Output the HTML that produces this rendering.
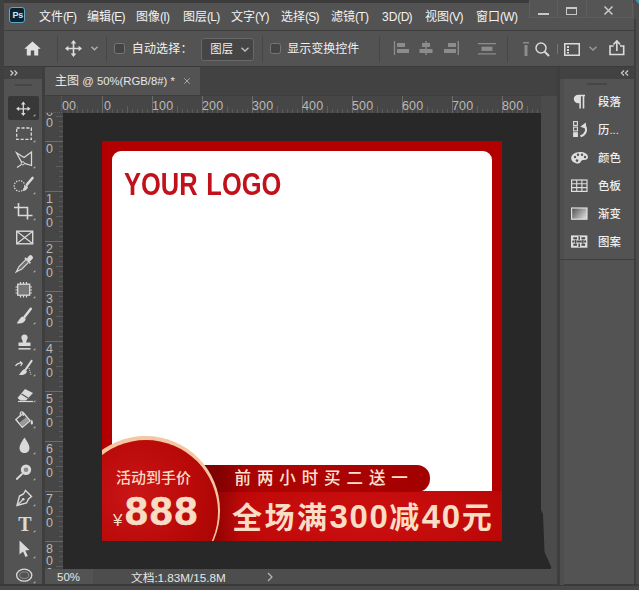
<!DOCTYPE html>
<html><head><meta charset="utf-8">
<style>
*{margin:0;padding:0;box-sizing:border-box}
html,body{width:639px;height:590px;overflow:hidden;background:#535353}
body{position:relative;font-family:"Liberation Sans","Noto Sans CJK SC",sans-serif;font-size:12px;color:#e6e6e6}
.a{position:absolute}
.t{position:absolute;white-space:nowrap;line-height:1}
svg{position:absolute;overflow:visible}
.m{color:#f2f2f2}
.l{font-size:12px;letter-spacing:-0.7px}
.p{font-size:11.400px;color:#f0f0f0;font-weight:500}
</style></head><body>
<!-- frame -->
<div class="a" style="left:0;top:0;width:639px;height:590px;background:#535353"></div>
<div class="a" style="left:0;top:0;width:639px;height:3px;background:#3c3c3c"></div>
<div class="a" style="left:0;top:0;width:4px;height:590px;background:#404040"></div>
<div class="a" style="left:634px;top:0;width:5px;height:590px;background:#4c4c4c"></div><div class="a" style="left:634px;top:19px;width:1.500px;height:571px;background:#3e3e3e"></div>
<svg style="left:635px;top:0" width="4" height="5"><path d="M0.500 0H4V4.500Z" fill="#3f8fa8"/></svg>
<!-- menubar -->
<div class="a" id="menubar" style="left:4px;top:3px;width:630px;height:27px;background:#535353"></div>
<div class="a" style="left:9.300px;top:7.300px;width:16.200px;height:15.400px;background:#0a2233;border:1.300px solid #5fa8c4;border-radius:3px"></div>
<div class="t" style="left:12.500px;top:10.500px;font-size:9px;font-weight:bold;color:#c8e6f8;letter-spacing:-0.200px">Ps</div>
<div class="t m" style="left:39px;top:10.500px">文件<span class="l">(F)</span></div>
<div class="t m" style="left:87px;top:10.500px">编辑<span class="l">(E)</span></div>
<div class="t m" style="left:136px;top:10.500px">图像<span class="l">(I)</span></div>
<div class="t m" style="left:183px;top:10.500px">图层<span class="l">(L)</span></div>
<div class="t m" style="left:231px;top:10.500px">文字<span class="l">(Y)</span></div>
<div class="t m" style="left:281px;top:10.500px">选择<span class="l">(S)</span></div>
<div class="t m" style="left:331px;top:10.500px">滤镜<span class="l">(T)</span></div>
<div class="t m" style="left:382px;top:10.500px">3D<span class="l">(D)</span></div>
<div class="t m" style="left:425px;top:10.500px">视图<span class="l">(V)</span></div>
<div class="t m" style="left:476px;top:10.500px">窗口<span class="l">(W)</span></div>
<!-- window controls -->
<div class="a" style="left:529px;top:0;width:104px;height:18px;border:1px solid #5e5e5e;border-top:none;background:#555"></div>
<div class="a" style="left:557px;top:0;width:1px;height:18px;background:#5e5e5e"></div>
<div class="a" style="left:586px;top:0;width:1px;height:18px;background:#5e5e5e"></div>
<div class="a" style="left:538px;top:12.500px;width:11px;height:2px;background:#c8c8c8"></div>
<div class="a" style="left:566px;top:7px;width:11px;height:8px;border:1.5px solid #c8c8c8;border-top-width:2px"></div>
<svg style="left:604px;top:6px" width="9" height="9"><path d="M0.5 0.5L8.5 8.5M8.5 0.5L0.5 8.5" stroke="#c8c8c8" stroke-width="1.6" fill="none"/></svg>
<!-- options bar -->
<div class="a" style="left:4px;top:30px;width:630px;height:1px;background:#3e3e3e"></div>
<div class="a" style="left:4px;top:31px;width:630px;height:35px;background:#535353"></div>
<div class="a" style="left:4px;top:66px;width:630px;height:1px;background:#3a3a3a"></div>
<!-- home -->
<svg style="left:24px;top:41px" width="17" height="15" viewBox="0 0 17 15"><path d="M8.5 0.5L0.3 7.7H2.8V14.5H6.8V9.5H10.2V14.5H14.2V7.7H16.7Z" fill="#e0e0e0"/></svg>
<div class="a" style="left:57px;top:36px;width:1px;height:26px;background:#474747"></div>
<!-- move icon opts -->
<svg style="left:65px;top:40px" width="17" height="17" viewBox="0 0 17 17"><path d="M8.5 0L5.7 3.4H7.7V7.7H3.4V5.7L0 8.5L3.4 11.3V9.3H7.7V13.6H5.7L8.5 17L11.3 13.6H9.3V9.3H13.6V11.3L17 8.5L13.6 5.7V7.7H9.3V3.4H11.3Z" fill="#dcdcdc"/></svg>
<svg style="left:91px;top:46px" width="7" height="5"><path d="M0.5 0.7L3.5 3.8L6.5 0.7" stroke="#b0b0b0" stroke-width="1.3" fill="none"/></svg>
<div class="a" style="left:106px;top:36px;width:1px;height:26px;background:#474747"></div>
<div class="a" style="left:114px;top:43px;width:11px;height:11px;border:1px solid #767676;border-radius:2.500px;background:#444"></div>
<div class="t" style="left:131.700px;top:43px;font-size:12px;letter-spacing:0.200px;color:#f0f0f0">自动选择：</div>
<div class="a" style="left:200.500px;top:38px;width:53px;height:22.500px;border:1px solid #686868;border-radius:3px;background:#454545"></div>
<div class="t" style="left:210.300px;top:43.700px;font-size:11.400px;color:#f0f0f0">图层</div>
<svg style="left:241px;top:47px" width="8" height="5"><path d="M0.5 0.7L4 4L7.5 0.7" stroke="#c0c0c0" stroke-width="1.3" fill="none"/></svg>
<div class="a" style="left:261.500px;top:36px;width:1px;height:26px;background:#474747"></div>
<div class="a" style="left:270px;top:43px;width:11px;height:11px;border:1px solid #767676;border-radius:2.500px;background:#444"></div>
<div class="t" style="left:287.300px;top:43px;font-size:12px;color:#f0f0f0">显示变换控件</div>
<div class="a" style="left:379px;top:36px;width:1px;height:26px;background:#474747"></div>
<!-- align icons -->
<svg style="left:394px;top:41px" width="15" height="14"><path d="M0.5 0V14" stroke="#8c8c8c" stroke-width="1.4"/><rect x="3" y="2" width="8" height="4" fill="#8c8c8c"/><rect x="3" y="8" width="12" height="4" fill="#8c8c8c"/></svg>
<svg style="left:419px;top:41px" width="14" height="14"><path d="M7 0V14" stroke="#8c8c8c" stroke-width="1.4"/><rect x="3" y="2" width="8" height="4" fill="#8c8c8c"/><rect x="0.5" y="8" width="13" height="4" fill="#8c8c8c"/></svg>
<svg style="left:443.500px;top:41px" width="15" height="14"><path d="M14.3 0V14" stroke="#8c8c8c" stroke-width="1.4"/><rect x="4" y="2" width="8" height="4" fill="#8c8c8c"/><rect x="0" y="8" width="12" height="4" fill="#8c8c8c"/></svg>
<svg style="left:477.500px;top:43px" width="18" height="12"><path d="M0 0.700H18M0 10.800H18" stroke="#8c8c8c" stroke-width="1.300"/><rect x="3.500" y="3.700" width="11" height="4.200" fill="#8c8c8c"/></svg>
<div class="a" style="left:507px;top:36px;width:1px;height:26px;background:#474747"></div>
<svg style="left:523px;top:42px" width="6" height="14"><rect x="0" y="0" width="6" height="1.5" fill="#8c8c8c"/><rect x="1.5" y="3" width="3" height="11" fill="#8c8c8c"/></svg>
<svg style="left:535px;top:42px" width="15" height="15"><circle cx="6" cy="6" r="5" stroke="#d8d8d8" stroke-width="1.5" fill="none"/><path d="M9.7 9.7L14 14" stroke="#d8d8d8" stroke-width="2"/></svg>
<div class="a" style="left:557px;top:44px;width:1px;height:10px;background:#777"></div>
<svg style="left:564px;top:43px" width="16" height="13"><rect x="0.75" y="0.75" width="14.500" height="11.500" stroke="#dcdcdc" stroke-width="1.5" fill="none"/><rect x="3" y="3" width="2" height="2" fill="#dcdcdc"/><rect x="3" y="6" width="2" height="2" fill="#dcdcdc"/><rect x="3" y="9" width="2" height="1.5" fill="#dcdcdc"/></svg>
<svg style="left:589px;top:46px" width="8" height="5"><path d="M0.5 0.7L4 4L7.5 0.7" stroke="#9a9a9a" stroke-width="1.3" fill="none"/></svg>
<svg style="left:609px;top:40px" width="16" height="16"><path d="M4.700 6H1V14.500H14.700V6H11" stroke="#dcdcdc" stroke-width="1.600" fill="none"/><path d="M7.850 11V2" stroke="#dcdcdc" stroke-width="1.600"/><path d="M4.500 4.500L7.850 1L11.200 4.500" stroke="#dcdcdc" stroke-width="1.600" fill="none"/></svg>

<!-- left toolbar -->
<div class="a" style="left:4px;top:67px;width:38px;height:12px;background:#424242"></div>
<svg style="left:10px;top:70px" width="8" height="6"><path d="M0.5 0.5L3 3L0.5 5.5M4.5 0.5L7 3L4.5 5.5" stroke="#d0d0d0" stroke-width="1.2" fill="none"/></svg>
<div class="a" style="left:4px;top:79px;width:38px;height:506px;background:#535353"></div>
<div class="a" style="left:15px;top:84px;width:17px;height:2px;background:#464646"></div>
<div class="a" style="left:42px;top:67px;width:3px;height:518px;background:#3e3e3e"></div>
<div class="a" style="left:8px;top:96px;width:31px;height:24px;background:#383838;border-radius:2px"></div>
<svg id="tools" style="left:0;top:0" width="46" height="590" viewBox="0 0 46 590" fill="none" stroke="#dadada" stroke-width="1.4">
<!-- move -->
<path d="M23.3 101.6L21.0 104.6H22.650000000000002V108.14999999999999H19.1V106.5L16.1 108.8L19.1 111.1V109.45H22.650000000000002V113.0H21.0L23.3 116.0L25.6 113.0H23.95V109.45H27.5V111.1L30.5 108.8L27.5 106.5V108.14999999999999H23.95V104.6H25.6Z" fill="#dadada" stroke="none"/>
<path d="M35.300 116.2v-2.200l-2.200 2.200Z" fill="#b4b4b4" stroke="none"/>
<!-- marquee -->
<rect x="16.700" y="128" width="14.600" height="11.400" stroke-dasharray="3.100 1.700" stroke-width="1.300"/>
<path d="M35.300 142.2v-2.200l-2.200 2.200Z" fill="#b4b4b4" stroke="none"/>
<!-- poly lasso -->
<path d="M22 163L16.500 152.800L24 157.500L31.500 152V165.500L24.500 163.300" stroke-width="1.250"/><circle cx="22.800" cy="163.300" r="1.600" stroke-width="1"/><path d="M21.500 164.500L17 167.500" stroke-width="1.100"/>
<path d="M35.300 168.2v-2.200l-2.200 2.200Z" fill="#b4b4b4" stroke="none"/>
<!-- quick select -->
<circle cx="19.5" cy="186" r="5.3" stroke-dasharray="1.3 1.3" stroke-width="1.3"/>
<path d="M32.5 178L27 184.5" stroke-width="2.6" stroke-linecap="round"/><path d="M26.5 185.5C25 186 23.500 188 22.500 191C25.500 191 27.500 189 28 187Z" fill="#dadada" stroke="none"/>
<path d="M35.300 194.2v-2.200l-2.200 2.200Z" fill="#b4b4b4" stroke="none"/>
<!-- crop -->
<path d="M18.5 203V215.500H32.500M14 207.500H27.500V219.500" stroke-width="1.6"/>
<path d="M35.300 220.2v-2.200l-2.200 2.200Z" fill="#b4b4b4" stroke="none"/>
<!-- frame -->
<rect x="16.700" y="231.200" width="16" height="12.600" stroke-width="1.400"/><path d="M16.700 231.200L32.700 243.800M32.700 231.200L16.700 243.800" stroke-width="1.200"/>
<!-- eyedropper -->
<g transform="translate(24.2 264) rotate(45)"><rect x="-2.300" y="-11.300" width="4.600" height="6" rx="2" fill="#dadada" stroke="none"/><rect x="-3.800" y="-5.800" width="7.600" height="1.900" rx="0.500" fill="#dadada" stroke="none"/><path d="M-1.900 -3.900V5.500L-0.500 9.500L0 11.300L0.500 9.500L1.900 5.500V-3.900" stroke-width="1.150" fill="#707070"/></g>
<path d="M35.300 272.2v-2.200l-2.200 2.200Z" fill="#b4b4b4" stroke="none"/>
<!-- patch -->
<rect x="17.700" y="284.200" width="12" height="11" fill="#777" stroke-width="1.300"/><path d="M20.500 282V284M23.500 282V284M26.500 282V284M20.500 295.500V297.500M23.500 295.500V297.500M26.500 295.500V297.500M15.500 287H17.500M15.500 290H17.500M15.500 293H17.500M30 287H32M30 290H32M30 293H32" stroke-width="1.200"/>
<path d="M35.300 298.2v-2.200l-2.200 2.200Z" fill="#b4b4b4" stroke="none"/>
<!-- brush -->
<path d="M30.800 308.800L24.500 317" stroke-width="2.500" stroke-linecap="round"/><path d="M22.800 316.500C20.300 317 19.500 320 16.700 323.200C20.500 324 24.800 323 25.800 319Z" fill="#dadada" stroke="none"/>
<path d="M35.300 324.2v-2.200l-2.200 2.200Z" fill="#b4b4b4" stroke="none"/>
<!-- stamp -->
<path d="M24.500 334.500C22.300 334.500 21.300 336 21.300 337.500C21.300 339 22.800 340 22.800 342.500H18.500V346H30.500V342.500H26.200C26.200 340 27.700 339 27.700 337.500C27.700 336 26.700 334.500 24.500 334.500Z" fill="#dadada" stroke="none"/><path d="M18.500 348.800H30.500" stroke-width="1.500"/>
<path d="M35.300 350.2v-2.200l-2.200 2.200Z" fill="#b4b4b4" stroke="none"/>
<!-- history brush -->
<path d="M31.500 361L26 369" stroke-width="2.200" stroke-linecap="round"/><path d="M25 369C23 369.500 21.500 371 19 375C22.500 375.500 26 374.500 27 371.500Z" fill="#dadada" stroke="none"/><path d="M15.500 366C17 363.500 19.500 362.500 22.500 363.500M22.500 363.500L20 361.500M22.500 363.500L20.500 366" stroke-width="1.200"/><path d="M29 368L31 375" stroke-width="1" stroke-dasharray="1 1"/>
<path d="M35.300 376.2v-2.200l-2.200 2.200Z" fill="#b4b4b4" stroke="none"/>
<!-- eraser -->
<path d="M25 389L33 393L26 400.500H20.500L17.500 398Z" fill="#dadada" stroke="none"/><path d="M21.500 394L28 398" stroke="#535353" stroke-width="1.200"/><path d="M18 401.500H33" stroke-width="1.200"/>
<path d="M35.300 402.2v-2.200l-2.200 2.200Z" fill="#b4b4b4" stroke="none"/>
<!-- bucket -->
<g transform="translate(22.8 420) rotate(-40)"><rect x="-5" y="-4.800" width="10" height="10" stroke-width="1.400"/><rect x="-4.300" y="0" width="8.600" height="4.500" fill="#9a9a9a" stroke="none"/></g><path d="M20.300 416.500V413.300C20.300 411.300 23.300 411.300 23.300 413.300V416" stroke-width="1.200"/><path d="M31.800 419.500C30.200 422 30.200 424.300 31.800 424.800C33.400 424.300 33.400 422 31.800 419.500Z" fill="#dadada" stroke="none"/>
<path d="M35.300 428.2v-2.200l-2.200 2.200Z" fill="#b4b4b4" stroke="none"/>
<!-- blur drop -->
<path d="M24.500 437.500C22 441.500 19.500 444.500 19.500 448C19.500 451 21.700 453 24.500 453C27.300 453 29.500 451 29.500 448C29.500 444.500 27 441.500 24.500 437.500Z" fill="#dadada" stroke="none"/>
<path d="M35.300 454.2v-2.200l-2.200 2.200Z" fill="#b4b4b4" stroke="none"/>
<!-- dodge -->
<circle cx="26" cy="469.700" r="5.200" fill="#dadada" stroke="none"/><circle cx="26" cy="469.700" r="2.300" fill="#8a8a8a" stroke="none"/><path d="M22 474L16.800 479" stroke-width="1.800" stroke-linecap="round"/>
<path d="M35.300 480.2v-2.200l-2.200 2.200Z" fill="#b4b4b4" stroke="none"/>
<!-- pen -->
<path d="M25.500 490.500L31.500 496.500L28.500 499L26.500 503L17 505.500L19.500 496L23.500 494Z" stroke-width="1.400"/><path d="M17.500 505L22.500 500" stroke-width="1.100"/><circle cx="23.200" cy="499.300" r="1.300" fill="#dadada" stroke="none"/>
<path d="M35.300 506.2v-2.200l-2.200 2.200Z" fill="#b4b4b4" stroke="none"/>
</svg>
<div class="t" style="left:18.300px;top:514px;font-family:'Liberation Serif',serif;font-size:20px;color:#dadada;font-weight:bold">T</div>
<svg style="left:0;top:0" width="46" height="590" viewBox="0 0 46 590" fill="none" stroke="#dadada" stroke-width="1.400">
<path d="M35.300 532.2v-2.200l-2.200 2.200Z" fill="#b4b4b4" stroke="none"/>
<path d="M19.500 540.500V554.500L23 551.500L25.500 557L27.800 556L25.300 550.500L29.500 550Z" fill="#dadada" stroke="none"/>
<path d="M35.300 558.2v-2.200l-2.200 2.200Z" fill="#b4b4b4" stroke="none"/>
<ellipse cx="24.200" cy="575.200" rx="7.600" ry="6" stroke-width="1.300"/><ellipse cx="24.200" cy="575.200" rx="4.500" ry="3.300" stroke-width="0.800" stroke="#9a9a9a"/>
<path d="M35.300 583.2v-2.200l-2.200 2.200Z" fill="#b4b4b4" stroke="none"/>
</svg>


<!-- tab bar -->
<div class="a" style="left:45px;top:67px;width:512px;height:29px;background:#424242"></div>
<div class="a" style="left:45px;top:67px;width:155px;height:29px;background:#535353"></div>
<div class="t" style="left:55px;top:75px;font-size:12px">主图 <span style="font-size:11.300px">@ 50%(RGB/8#) *</span></div>
<svg style="left:184px;top:78px" width="6" height="6"><path d="M0.3 0.3L5.700 5.700M5.700 0.300L0.300 5.700" stroke="#a8a8a8" stroke-width="1" fill="none"/></svg>

<!-- rulers -->
<div class="a" style="left:45px;top:95px;width:496px;height:18px;background:#464646;border-top:1px solid #3e3e3e"></div>
<div class="a" style="left:45px;top:113px;width:18px;height:456px;background:#464646"></div>
<!-- canvas -->
<div class="a" style="left:63px;top:113px;width:478px;height:456px;background:#282828"></div>
<svg style="left:0;top:0" width="639" height="590" viewBox="0 0 639 590">
<path d="M102.5 96V113M152.5 96V113M202.5 96V113M252.5 96V113M302.5 96V113M352.5 96V113M402.5 96V113M452.5 96V113M502.5 96V113M45 141.5H63M45 191.5H63M45 241.5H63M45 291.5H63M45 341.5H63M45 391.5H63M45 441.5H63M45 491.5H63M45 541.5H63" stroke="#6c6c6c" stroke-width="1" fill="none"/>
<path d="M77.5 106V113M127.5 106V113M177.5 106V113M227.5 106V113M277.5 106V113M327.5 106V113M377.5 106V113M427.5 106V113M477.5 106V113M527.5 106V113M56 116.5H63M56 166.5H63M56 216.5H63M56 266.5H63M56 316.5H63M56 366.5H63M56 416.5H63M56 466.5H63M56 516.5H63M56 566.5H63" stroke="#5e5e5e" stroke-width="1" fill="none"/>
<path d="M67.5 109V113M72.5 109V113M82.5 109V113M87.5 109V113M92.5 109V113M97.5 109V113M107.5 109V113M112.5 109V113M117.5 109V113M122.5 109V113M132.5 109V113M137.5 109V113M142.5 109V113M147.5 109V113M157.5 109V113M162.5 109V113M167.5 109V113M172.5 109V113M182.5 109V113M187.5 109V113M192.5 109V113M197.5 109V113M207.5 109V113M212.5 109V113M217.5 109V113M222.5 109V113M232.5 109V113M237.5 109V113M242.5 109V113M247.5 109V113M257.5 109V113M262.5 109V113M267.5 109V113M272.5 109V113M282.5 109V113M287.5 109V113M292.5 109V113M297.5 109V113M307.5 109V113M312.5 109V113M317.5 109V113M322.5 109V113M332.5 109V113M337.5 109V113M342.5 109V113M347.5 109V113M357.5 109V113M362.5 109V113M367.5 109V113M372.5 109V113M382.5 109V113M387.5 109V113M392.5 109V113M397.5 109V113M407.5 109V113M412.5 109V113M417.5 109V113M422.5 109V113M432.5 109V113M437.5 109V113M442.5 109V113M447.5 109V113M457.5 109V113M462.5 109V113M467.5 109V113M472.5 109V113M482.5 109V113M487.5 109V113M492.5 109V113M497.5 109V113M507.5 109V113M512.5 109V113M517.5 109V113M522.5 109V113M532.5 109V113M537.5 109V113M59 121.5H63M59 126.5H63M59 131.5H63M59 136.5H63M59 146.5H63M59 151.5H63M59 156.5H63M59 161.5H63M59 171.5H63M59 176.5H63M59 181.5H63M59 186.5H63M59 196.5H63M59 201.5H63M59 206.5H63M59 211.5H63M59 221.5H63M59 226.5H63M59 231.5H63M59 236.5H63M59 246.5H63M59 251.5H63M59 256.5H63M59 261.5H63M59 271.5H63M59 276.5H63M59 281.5H63M59 286.5H63M59 296.5H63M59 301.5H63M59 306.5H63M59 311.5H63M59 321.5H63M59 326.5H63M59 331.5H63M59 336.5H63M59 346.5H63M59 351.5H63M59 356.5H63M59 361.5H63M59 371.5H63M59 376.5H63M59 381.5H63M59 386.5H63M59 396.5H63M59 401.5H63M59 406.5H63M59 411.5H63M59 421.5H63M59 426.5H63M59 431.5H63M59 436.5H63M59 446.5H63M59 451.5H63M59 456.5H63M59 461.5H63M59 471.5H63M59 476.5H63M59 481.5H63M59 486.5H63M59 496.5H63M59 501.5H63M59 506.5H63M59 511.5H63M59 521.5H63M59 526.5H63M59 531.5H63M59 536.5H63M59 546.5H63M59 551.5H63M59 556.5H63M59 561.5H63" stroke="#5a5a5a" stroke-width="1" fill="none"/>
</svg>
<div class="t" style="left:62px;top:100px;font-size:12.500px;color:#b9b9b9;letter-spacing:0.150px">00</div>
<div class="t" style="left:104px;top:100px;font-size:12.500px;color:#b9b9b9;letter-spacing:0.150px">0</div>
<div class="t" style="left:152.0px;top:100px;font-size:12.500px;color:#b9b9b9;letter-spacing:0.150px">100</div>
<div class="t" style="left:202.0px;top:100px;font-size:12.500px;color:#b9b9b9;letter-spacing:0.150px">200</div>
<div class="t" style="left:252.0px;top:100px;font-size:12.500px;color:#b9b9b9;letter-spacing:0.150px">300</div>
<div class="t" style="left:302.0px;top:100px;font-size:12.500px;color:#b9b9b9;letter-spacing:0.150px">400</div>
<div class="t" style="left:352.0px;top:100px;font-size:12.500px;color:#b9b9b9;letter-spacing:0.150px">500</div>
<div class="t" style="left:402.0px;top:100px;font-size:12.500px;color:#b9b9b9;letter-spacing:0.150px">600</div>
<div class="t" style="left:452.0px;top:100px;font-size:12.500px;color:#b9b9b9;letter-spacing:0.150px">700</div>
<div class="t" style="left:502.0px;top:100px;font-size:12.500px;color:#b9b9b9;letter-spacing:0.150px">800</div>
<div class="a" style="left:45px;top:113px;width:18px;height:20px;overflow:hidden"><div class="t" style="left:1px;top:-7px;font-size:12.500px;color:#b9b9b9;letter-spacing:0.150px">0</div><div class="t" style="left:1px;top:4px;font-size:12.500px;color:#b9b9b9;letter-spacing:0.150px">0</div></div>
<div class="t" style="left:46px;top:143.0px;font-size:12.500px;color:#b9b9b9;letter-spacing:0.150px">0</div>
<div class="t" style="left:46px;top:193.0px;font-size:12.500px;color:#b9b9b9;letter-spacing:0.150px">1</div>
<div class="t" style="left:46px;top:204.8px;font-size:12.500px;color:#b9b9b9;letter-spacing:0.150px">0</div>
<div class="t" style="left:46px;top:216.6px;font-size:12.500px;color:#b9b9b9;letter-spacing:0.150px">0</div>
<div class="t" style="left:46px;top:243.0px;font-size:12.500px;color:#b9b9b9;letter-spacing:0.150px">2</div>
<div class="t" style="left:46px;top:254.8px;font-size:12.500px;color:#b9b9b9;letter-spacing:0.150px">0</div>
<div class="t" style="left:46px;top:266.6px;font-size:12.500px;color:#b9b9b9;letter-spacing:0.150px">0</div>
<div class="t" style="left:46px;top:293.0px;font-size:12.500px;color:#b9b9b9;letter-spacing:0.150px">3</div>
<div class="t" style="left:46px;top:304.8px;font-size:12.500px;color:#b9b9b9;letter-spacing:0.150px">0</div>
<div class="t" style="left:46px;top:316.6px;font-size:12.500px;color:#b9b9b9;letter-spacing:0.150px">0</div>
<div class="t" style="left:46px;top:343.0px;font-size:12.500px;color:#b9b9b9;letter-spacing:0.150px">4</div>
<div class="t" style="left:46px;top:354.8px;font-size:12.500px;color:#b9b9b9;letter-spacing:0.150px">0</div>
<div class="t" style="left:46px;top:366.6px;font-size:12.500px;color:#b9b9b9;letter-spacing:0.150px">0</div>
<div class="t" style="left:46px;top:393.0px;font-size:12.500px;color:#b9b9b9;letter-spacing:0.150px">5</div>
<div class="t" style="left:46px;top:404.8px;font-size:12.500px;color:#b9b9b9;letter-spacing:0.150px">0</div>
<div class="t" style="left:46px;top:416.6px;font-size:12.500px;color:#b9b9b9;letter-spacing:0.150px">0</div>
<div class="t" style="left:46px;top:443.0px;font-size:12.500px;color:#b9b9b9;letter-spacing:0.150px">6</div>
<div class="t" style="left:46px;top:454.8px;font-size:12.500px;color:#b9b9b9;letter-spacing:0.150px">0</div>
<div class="t" style="left:46px;top:466.6px;font-size:12.500px;color:#b9b9b9;letter-spacing:0.150px">0</div>
<div class="t" style="left:46px;top:493.0px;font-size:12.500px;color:#b9b9b9;letter-spacing:0.150px">7</div>
<div class="t" style="left:46px;top:504.8px;font-size:12.500px;color:#b9b9b9;letter-spacing:0.150px">0</div>
<div class="t" style="left:46px;top:516.6px;font-size:12.500px;color:#b9b9b9;letter-spacing:0.150px">0</div>
<div class="a" style="left:45px;top:541px;width:18px;height:28px;overflow:hidden"><div class="t" style="left:1px;top:2.0px;font-size:12.500px;color:#b9b9b9;letter-spacing:0.150px">8</div><div class="t" style="left:1px;top:13.8px;font-size:12.500px;color:#b9b9b9;letter-spacing:0.150px">0</div><div class="t" style="left:1px;top:25.6px;font-size:12.500px;color:#b9b9b9;letter-spacing:0.150px">0</div></div>
<div class="a" style="left:45px;top:96px;width:17px;height:17px;background:#464646;border-right:1px dotted #606060;border-bottom:1px dotted #606060"></div>
<!-- scrollbar right -->
<div class="a" style="left:541px;top:96px;width:16px;height:489px;background:#4b4b4b"></div>
<svg style="left:0;top:0;filter:blur(0.6px)" width="639" height="590"><path d="M540 508L543 514L544.500 552L551 566.500V569.500H540Z" fill="#282828"/></svg>
<!-- status bar -->
<div class="a" style="left:45px;top:569px;width:512px;height:15px;background:#4d4d4d"></div>
<div class="a" style="left:45px;top:569px;width:48px;height:15px;background:#535353"></div>
<div class="t" style="left:57px;top:572px;font-size:11.500px">50%</div>
<div class="t" style="left:131px;top:571.500px;font-size:11.700px">文档:1.83M/15.8M</div>
<svg style="left:266.500px;top:572px" width="6" height="10"><path d="M1 1L5 5L1 9" stroke="#b8b8b8" stroke-width="1.2" fill="none"/></svg>
<div class="a" style="left:0;top:583.500px;width:639px;height:2px;background:#3a3a3a"></div>
<div class="a" style="left:0;top:585.500px;width:639px;height:4.500px;background:#494949"></div>

<!-- artboard -->
<div class="a" id="art" style="left:102px;top:141px;width:400px;height:400px;background:#b20000;overflow:hidden">
  <div class="a" style="left:10px;top:10px;width:380px;height:340px;background:#fff;border-radius:9px 9px 0 0"></div>
  <div class="t" style="left:22px;top:28px;font-size:30.500px;font-weight:bold;color:#c1121c;transform-origin:0 0;transform:scaleX(0.835);word-spacing:2px">YOUR LOGO</div>
  <!-- bottom band -->
  <div class="a" style="left:0;top:350px;width:400px;height:50px;background:linear-gradient(90deg,rgba(110,0,0,.55) 112px,rgba(110,0,0,0) 140px),radial-gradient(ellipse 230px 70px at 260px 25px,#cd1010 0%,#c20a0a 50%,#a90000 100%)"></div>
  <!-- ribbon -->
  <div class="a" style="left:60px;top:324px;width:268px;height:26.500px;border-radius:0 13px 13px 0;background:linear-gradient(90deg,rgba(90,0,0,.5) 55px,rgba(90,0,0,0) 85px),linear-gradient(90deg,#a00000,#ae0404 55%,#a20000)"></div>
  <!-- circle -->
  <div class="a" style="left:-31px;top:295px;width:149px;height:149px;border-radius:50%;background:#f5c6a2"></div>
  <div class="a" style="left:-28.300px;top:299px;width:144px;height:144px;border-radius:50%;background:radial-gradient(circle at 62px 55px,#c91616 0%,#bb0a0a 45%,#9e0000 100%)"></div>
  <div class="t" style="left:14px;top:329px;font-size:15px;color:#f8dcc6;font-weight:500">活动到手价</div>
  <div class="t" style="left:11px;top:371px;font-size:17px;color:#f8dcc6;font-weight:300">¥</div>
  <div class="t" style="left:23px;top:350px;font-size:41px;font-weight:bold;color:#f9dcc4;letter-spacing:2px;-webkit-text-stroke:0.7px #f9dcc4">888</div>
  <div class="t" style="left:132.500px;top:329px;font-size:16.500px;letter-spacing:5.900px;color:#fbe2d0;font-weight:500">前两小时买二送一</div>
  <div class="t" style="left:130px;top:359px;font-size:30px;font-weight:bold;letter-spacing:2.5px;color:#fbdcc4">全场满<span style="font-size:33px;letter-spacing:1.6px">300</span>减<span style="font-size:33px;letter-spacing:1.6px">40</span>元</div>
</div>

<!-- right panel -->
<div class="a" style="left:557px;top:67px;width:3px;height:518px;background:#3e3e3e"></div>
<div class="a" style="left:560px;top:67px;width:74px;height:12px;background:#424242"></div>
<svg style="left:621px;top:70px" width="8" height="6"><path d="M3 0.5L0.5 3L3 5.5M7 0.5L4.5 3L7 5.5" stroke="#d0d0d0" stroke-width="1.2" fill="none"/></svg>
<div class="a" style="left:560px;top:79px;width:74px;height:180px;background:#535353"></div>
<div class="a" style="left:587px;top:83px;width:20px;height:2px;background:#464646"></div>
<div class="a" style="left:560px;top:79px;width:4px;height:506px;background:#4e4e4e"></div>
<div class="a" style="left:560px;top:259px;width:74px;height:1px;background:#3e3e3e"></div>
<svg style="left:0;top:0" width="639" height="590" viewBox="0 0 639 590" fill="none">
<!-- pilcrow -->
<path d="M585 94.700H578.500C575.700 94.700 573.800 96.600 573.800 99C573.800 101.400 575.700 103.200 578.500 103.200H579.300V108.500H580.900V96.200H582.700V108.500H584.300V96.200H585Z" fill="#dedede"/>
<!-- history -->
<rect x="573.600" y="121.600" width="3.800" height="3.800" stroke="#dedede" stroke-width="1.100"/><rect x="573.600" y="127.100" width="3.800" height="3.800" stroke="#dedede" stroke-width="1.100"/><rect x="573.100" y="132.200" width="4.800" height="4.800" fill="#dedede"/>
<path d="M580.500 136.300C586 134.500 587.800 129.500 584 125" stroke="#dedede" stroke-width="2"/><path d="M580.300 126.800L585.800 122.600L586.300 128.800Z" fill="#dedede"/>
<!-- palette -->
<path d="M580 152C575 152 571.200 154.800 571.200 158C571.200 161.200 574.500 163.500 578 163.500C580 163.500 580.500 162.300 581 161.300C581.500 160.300 582.500 160 584 160C586.500 160 588 158.800 588 157C588 154 584.500 152 580 152Z" fill="#dedede"/>
<circle cx="575" cy="157" r="1.200" fill="#535353"/><circle cx="578" cy="154.800" r="1.200" fill="#535353"/><circle cx="582" cy="154.800" r="1.200" fill="#535353"/><circle cx="585" cy="157" r="1.200" fill="#535353"/><circle cx="577" cy="160.600" r="1.300" fill="#535353"/>
<!-- swatches -->
<rect x="571.600" y="180" width="15.400" height="11.400" stroke="#dedede" stroke-width="1.200"/><path d="M576.700 180V191.400M581.900 180V191.400M571.600 183.800H587M571.600 187.600H587" stroke="#dedede" stroke-width="1.100"/>
<!-- gradient -->
<defs><linearGradient id="gg" x1="0" y1="0" x2="1" y2="0.600"><stop offset="0" stop-color="#4c4c4c"/><stop offset="1" stop-color="#d0d0d0"/></linearGradient></defs>
<rect x="571.600" y="208" width="15.400" height="11.200" fill="url(#gg)" stroke="#dedede" stroke-width="1.200"/>
<!-- pattern -->
<rect x="571" y="235.400" width="16.400" height="12.300" fill="#dedede"/>
<path d="M573.300 238.300H577M581.400 238.300H585.100M573.300 244.800H577M581.400 244.800H585.100M572.300 241.550H574.300M576.600 241.550H581.800M584.100 241.550H586.100" stroke="#4a4a4a" stroke-width="1.900"/><path d="M579.200 236.200V239.700M579.200 243.400V246.900M575.500 239.700V243.400M582.900 239.700V243.400" stroke="#4a4a4a" stroke-width="1.500"/>
</svg>
<div class="t p" style="left:598px;top:96.5px">段落</div>
<div class="t p" style="left:598px;top:124.5px">历...</div>
<div class="t p" style="left:598px;top:152.5px">颜色</div>
<div class="t p" style="left:598px;top:180.5px">色板</div>
<div class="t p" style="left:598px;top:208.5px">渐变</div>
<div class="t p" style="left:598px;top:236.5px">图案</div>
</body></html>
